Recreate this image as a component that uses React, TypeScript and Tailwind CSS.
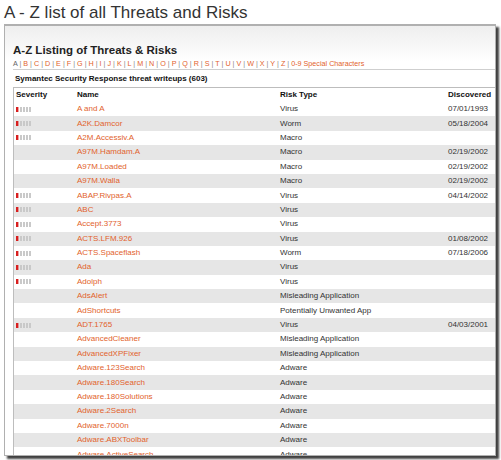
const letters = "ABCDEFGHIJKLMNOPQRSTUVWXYZ".split("");

type Row = { sev: boolean; name: string; type: string; date?: string };

const rows: Row[] = [
  { sev: true, name: "A and A", type: "Virus", date: "07/01/1993" },
  { sev: true, name: "A2K.Damcor", type: "Worm", date: "05/18/2004" },
  { sev: true, name: "A2M.Accessiv.A", type: "Macro" },
  { sev: false, name: "A97M.Hamdam.A", type: "Macro", date: "02/19/2002" },
  { sev: false, name: "A97M.Loaded", type: "Macro", date: "02/19/2002" },
  { sev: false, name: "A97M.Walla", type: "Macro", date: "02/19/2002" },
  { sev: true, name: "ABAP.Rivpas.A", type: "Virus", date: "04/14/2002" },
  { sev: true, name: "ABC", type: "Virus" },
  { sev: true, name: "Accept.3773", type: "Virus" },
  { sev: true, name: "ACTS.LFM.926", type: "Virus", date: "01/08/2002" },
  { sev: true, name: "ACTS.Spaceflash", type: "Worm", date: "07/18/2006" },
  { sev: true, name: "Ada", type: "Virus" },
  { sev: true, name: "Adolph", type: "Virus" },
  { sev: false, name: "AdsAlert", type: "Misleading Application" },
  { sev: false, name: "AdShortcuts", type: "Potentially Unwanted App" },
  { sev: true, name: "ADT.1765", type: "Virus", date: "04/03/2001" },
  { sev: false, name: "AdvancedCleaner", type: "Misleading Application" },
  { sev: false, name: "AdvancedXPFixer", type: "Misleading Application" },
  { sev: false, name: "Adware.123Search", type: "Adware" },
  { sev: false, name: "Adware.180Search", type: "Adware" },
  { sev: false, name: "Adware.180Solutions", type: "Adware" },
  { sev: false, name: "Adware.2Search", type: "Adware" },
  { sev: false, name: "Adware.7000n", type: "Adware" },
  { sev: false, name: "Adware.ABXToolbar", type: "Adware" },
  { sev: false, name: "Adware.ActiveSearch", type: "Adware" },
];

function Severity() {
  return (
    <svg width="17" height="5" viewBox="0 0 17 5">
      <rect x="0" y="0" width="2.4" height="5" fill="#d81e1e" />
      {[4, 7, 10, 13].map((x) => (
        <rect key={x} x={x} y="0" width="2" height="5" fill="#c9c9c9" />
      ))}
    </svg>
  );
}

export default function App() {
  return (
    <div className="w-[501px] h-[460px] overflow-hidden bg-white font-['Liberation_Sans',Arial,sans-serif]">
      <h1 className="h-[24px] pl-[4px] text-[17px] leading-[25px] text-[#333]">
        A - Z list of all Threats and Risks
      </h1>

      <div className="ml-[4px] w-[492px] h-[432px] overflow-hidden border border-t-2 border-[#b0b0b0] bg-gradient-to-b from-[#eeeeee] to-white to-[36px] shadow-[3px_3px_2px_rgba(0,0,0,0.75)] pl-[8px] pt-[16px]">
        <h2 className="text-[11.5px] leading-[16px] font-bold text-[#222]">
          A-Z Listing of Threats &amp; Risks
        </h2>

        <div className="mt-[1px] h-[11px] border-b border-[#cfcfcf] text-[7.2px] leading-[10px] text-[#888] whitespace-nowrap">
          {letters.map((l, i) => (
            <span key={l}>
              <span className={i === 0 ? "text-[#666]" : "text-[#e2622c]"}>{l}</span>
              {" | "}
            </span>
          ))}
          <span className="text-[#e2622c]">0-9 Special Characters</span>
        </div>

        <p className="mt-[4px] pl-[2px] text-[8px] leading-[10px] font-bold text-[#111]">
          Symantec Security Response threat writeups (603)
        </p>

        <div className="mt-[3px] border-l border-t border-[#bdbdbd] text-[8px] leading-[10px]">
          <div className="grid grid-cols-[61px_203px_168px_1fr] h-[14px] items-center pl-[2px] font-bold text-[#111]">
            <span>Severity</span>
            <span>Name</span>
            <span>Risk Type</span>
            <span>Discovered</span>
          </div>
          {rows.map((r, i) => (
            <div
              key={r.name}
              className={`grid grid-cols-[61px_203px_168px_1fr] h-[14.4px] items-center pl-[2px] ${
                i % 2 === 1 ? "bg-[#e6e6e6]" : "bg-white"
              }`}
            >
              <span className="flex items-center">{r.sev && <Severity />}</span>
              <span className="text-[#e2622c]">{r.name}</span>
              <span className="text-[#333]">{r.type}</span>
              <span className="text-[#333]">{r.date}</span>
            </div>
          ))}
        </div>
      </div>
    </div>
  );
}
